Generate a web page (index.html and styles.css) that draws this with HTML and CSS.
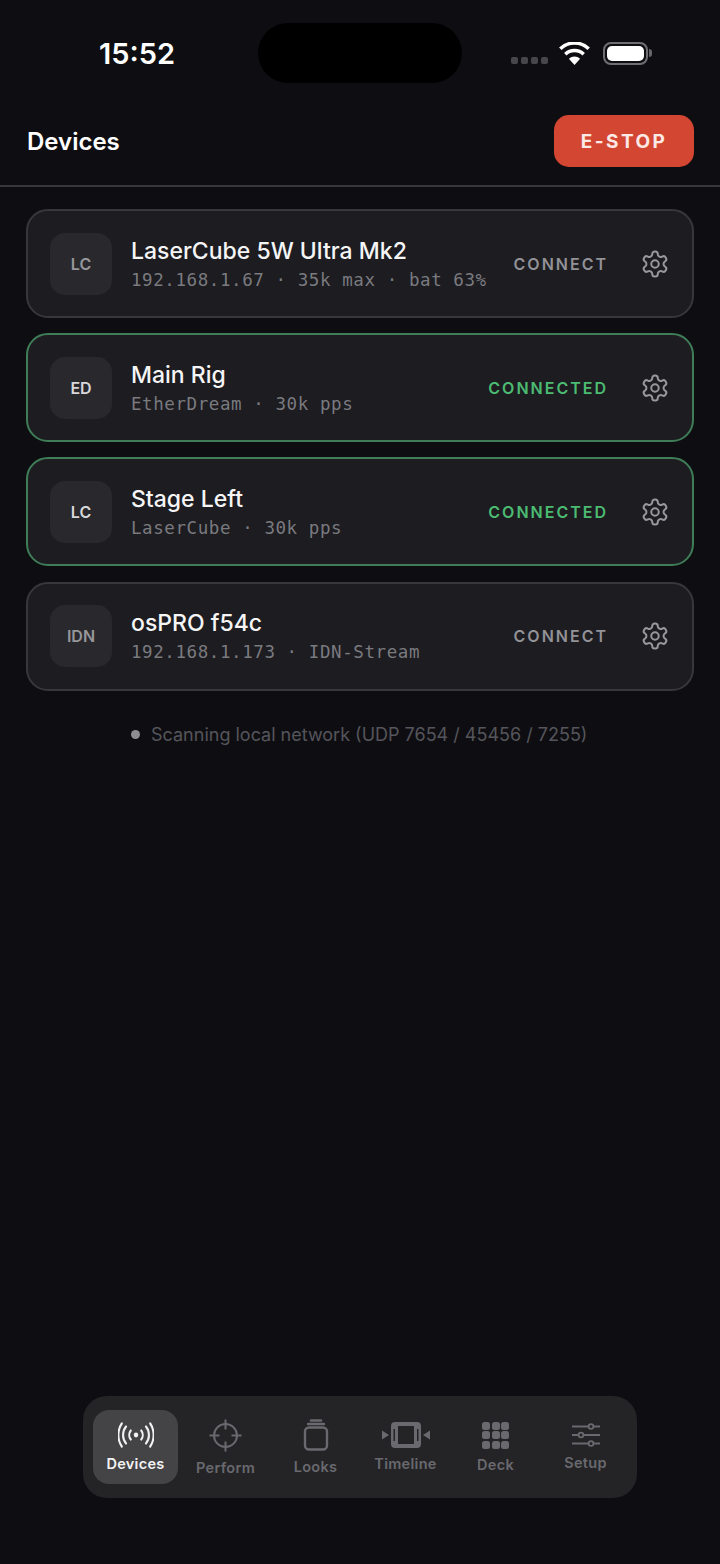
FILE: index.html
```html
<!DOCTYPE html>
<html lang="en">
<head>
    <meta charset="UTF-8">
    <meta name="viewport" content="width=device-width, initial-scale=1.0">
    <title>Devices</title>
    <link rel="stylesheet" href="styles.css">
</head>
<body>

<svg class="sprite" width="0" height="0">
    <symbol id="gear" viewBox="0 0 24 24">
        <path d="M12.22 2h-.44a2 2 0 0 0-2 2v.18a2 2 0 0 1-1 1.73l-.43.25a2 2 0 0 1-2 0l-.15-.08a2 2 0 0 0-2.73.73l-.22.38a2 2 0 0 0 .73 2.73l.15.1a2 2 0 0 1 1 1.72v.51a2 2 0 0 1-1 1.74l-.15.09a2 2 0 0 0-.73 2.73l.22.38a2 2 0 0 0 2.73.73l.15-.08a2 2 0 0 1 2 0l.43.25a2 2 0 0 1 1 1.73V20a2 2 0 0 0 2 2h.44a2 2 0 0 0 2-2v-.18a2 2 0 0 1 1-1.73l.43-.25a2 2 0 0 1 2 0l.15.08a2 2 0 0 0 2.73-.73l.22-.39a2 2 0 0 0-.73-2.73l-.15-.08a2 2 0 0 1-1-1.74v-.5a2 2 0 0 1 1-1.74l.15-.09a2 2 0 0 0 .73-2.73l-.22-.38a2 2 0 0 0-2.73-.73l-.15.08a2 2 0 0 1-2 0l-.43-.25a2 2 0 0 1-1-1.73V4a2 2 0 0 0-2-2z" fill="none" stroke="currentColor" stroke-width="1.6"/>
        <circle cx="12" cy="12" r="3" fill="none" stroke="currentColor" stroke-width="1.6"/>
    </symbol>
</svg>

<div class="screen">
    <div class="status-bar">
        <span class="time">15:52</span>
        <div class="island"></div>
        <div class="status-icons">
            <div class="signal"><i></i><i></i><i></i><i></i></div>
            <svg class="wifi" width="31" height="23" viewBox="0 0 31 23">
                <path d="M15.500 23l-5.600-6.300a8 8 0 0 1 11.200 0z" fill="#fff"/>
                <path d="M6.300 12.200a13.400 13.400 0 0 1 18.400 0" fill="none" stroke="#fff" stroke-width="3.500"/>
                <path d="M1.300 6.700a20.600 20.600 0 0 1 28.400 0" fill="none" stroke="#fff" stroke-width="3.500"/>
            </svg>
            <div class="battery"><div class="battery-fill"></div></div>
            <div class="battery-cap"></div>
        </div>
    </div>

    <header class="top-bar">
        <h1>Devices</h1>
        <button class="estop">E-STOP</button>
    </header>

    <main class="device-list">
        <div class="device">
            <div class="badge">LC</div>
            <div class="info">
                <div class="name">LaserCube 5W Ultra Mk2</div>
                <div class="meta">192.168.1.67 · 35k max · bat 63%</div>
            </div>
            <span class="action">CONNECT</span>
            <svg class="gear"><use href="#gear"/></svg>
        </div>
        <div class="device on">
            <div class="badge">ED</div>
            <div class="info">
                <div class="name">Main Rig</div>
                <div class="meta">EtherDream · 30k pps</div>
            </div>
            <span class="action">CONNECTED</span>
            <svg class="gear"><use href="#gear"/></svg>
        </div>
        <div class="device on">
            <div class="badge">LC</div>
            <div class="info">
                <div class="name">Stage Left</div>
                <div class="meta">LaserCube · 30k pps</div>
            </div>
            <span class="action">CONNECTED</span>
            <svg class="gear"><use href="#gear"/></svg>
        </div>
        <div class="device">
            <div class="badge">IDN</div>
            <div class="info">
                <div class="name">osPRO f54c</div>
                <div class="meta">192.168.1.173 · IDN-Stream</div>
            </div>
            <span class="action">CONNECT</span>
            <svg class="gear"><use href="#gear"/></svg>
        </div>

        <div class="scan">
            <span class="scan-dot"></span>
            Scanning local network (UDP 7654 / 45456 / 7255)
        </div>
    </main>

    <nav class="tabs">
        <div class="tab active">
            <svg width="36" height="26" viewBox="0 0 38 26" fill="none" stroke="currentColor" stroke-width="2.200" stroke-linecap="round" preserveAspectRatio="none">
                <circle cx="19" cy="13" r="2.400" fill="currentColor" stroke="none"/>
                <path d="M13.500 8.500a7 7 0 0 0 0 9"/>
                <path d="M24.500 8.500a7 7 0 0 1 0 9"/>
                <path d="M8.500 4.500a13 13 0 0 0 0 17"/>
                <path d="M29.500 4.500a13 13 0 0 1 0 17"/>
                <path d="M4 1.500a20 20 0 0 0 0 23"/>
                <path d="M34 1.500a20 20 0 0 1 0 23"/>
            </svg>
            <span>Devices</span>
        </div>
        <div class="tab">
            <svg width="33" height="33" viewBox="0 0 33 33" fill="none" stroke="currentColor" stroke-width="2">
                <circle cx="16.500" cy="16.500" r="11.500"/>
                <path d="M16.500 0.500v10M16.500 22.500v10M0.500 16.500h10M22.500 16.500h10"/>
            </svg>
            <span>Perform</span>
        </div>
        <div class="tab">
            <svg width="26" height="32" viewBox="0 0 26 32" fill="none" stroke="currentColor" stroke-width="2.400">
                <rect x="2" y="8.500" width="22" height="22" rx="4"/>
                <path d="M5 5h16" stroke-linecap="round"/>
                <path d="M8 1.500h10" stroke-linecap="round"/>
            </svg>
            <span>Looks</span>
        </div>
        <div class="tab">
            <svg width="48" height="26" viewBox="0 0 48 26" fill="none">
                <path d="M0 8.500l7 4.500-7 4.500z" fill="currentColor"/>
                <path d="M48 8.500l-7 4.500 7 4.500z" fill="currentColor"/>
                <path fill-rule="evenodd" d="M13 0h22a4 4 0 0 1 4 4v18a4 4 0 0 1-4 4H13a4 4 0 0 1-4-4V4a4 4 0 0 1 4-4zM16 4v18h16V4zM11.500 7v12h1.500V7zM35 7v12h1.500V7z" fill="currentColor"/>
            </svg>
            <span>Timeline</span>
        </div>
        <div class="tab">
            <div class="deck-icon">
                <i></i><i></i><i></i><i></i><i></i><i></i><i></i><i></i><i></i>
            </div>
            <span>Deck</span>
        </div>
        <div class="tab">
            <svg width="28" height="24" viewBox="0 0 28 24" fill="none" stroke="currentColor" stroke-width="1.800">
                <path d="M0 3.500h16M22 3.500h6M0 12h6M12 12h16M0 20.500h16M22 20.500h6"/>
                <circle cx="19" cy="3.500" r="2.400"/>
                <circle cx="9" cy="12" r="2.400"/>
                <circle cx="19" cy="20.500" r="2.400"/>
            </svg>
            <span>Setup</span>
        </div>
    </nav>
</div>

</body>
</html>
```

FILE: styles.css
```css
html, body {
    margin: 0;
    padding: 0;
}

body {
    font-family: Inter, "Noto Sans", sans-serif;
    background-color: #0e0e12;
    color: #fff;
}

.sprite {
    display: block;
    height: 0;
}

.screen {
    width: 720px;
    height: 1564px;
    display: flex;
    flex-direction: column;
    overflow: hidden;
}

/* status bar */
.status-bar {
    height: 60px;
    padding: 23px 0 17px 99px;
    display: flex;
    align-items: center;
}

.time {
    width: 159px;
    font-size: 29px;
    font-weight: 600;
}

.island {
    width: 204px;
    height: 60px;
    background-color: #000;
    border-radius: 30px;
}

.status-icons {
    margin-left: 49px;
    display: flex;
    align-items: center;
}

.signal {
    display: flex;
    gap: 3px;
    margin: 14px 11px 0 0;
}

.signal i {
    width: 7px;
    height: 7px;
    border-radius: 2px;
    background-color: #47474b;
}

.wifi {
    margin-right: 13px;
}

.battery {
    width: 45px;
    height: 23px;
    box-sizing: border-box;
    border: 2px solid #6f6f73;
    border-radius: 8px;
    padding: 2px;
}

.battery-fill {
    height: 100%;
    background-color: #fff;
    border-radius: 5px;
}

.battery-cap {
    width: 3px;
    height: 8px;
    margin-left: 1px;
    background-color: #66666a;
    border-radius: 0 3px 3px 0;
}

/* header */
.top-bar {
    height: 87px;
    box-sizing: border-box;
    padding: 15px 26px 18px 27px;
    display: flex;
    align-items: center;
    justify-content: space-between;
    border-bottom: 2px solid #38383c;
}

.top-bar h1 {
    margin: 0;
    font-size: 24px;
    font-weight: 600;
}

.estop {
    width: 140px;
    height: 52px;
    border: none;
    border-radius: 15px;
    background-color: #d34632;
    color: #fbe9e5;
    font-family: Inter, sans-serif;
    font-size: 19px;
    font-weight: 700;
    letter-spacing: 2.400px;
}

/* device cards */
.device-list {
    flex: 1;
    padding: 22px 26px 0;
    display: flex;
    flex-direction: column;
    gap: 15.200px;
}

.device {
    height: 109px;
    box-sizing: border-box;
    padding: 0 22px;
    display: flex;
    align-items: center;
    background-color: #1c1c21;
    border: 2px solid #38383c;
    border-radius: 22px;
}

.device.on {
    border-color: #3f7d58;
}

.badge {
    width: 62px;
    height: 62px;
    flex: none;
    display: flex;
    align-items: center;
    justify-content: center;
    background-color: #29292d;
    border-radius: 15px;
    color: #97979b;
    font-size: 16px;
    font-weight: 600;
}

.device.on .badge {
    color: #d8d8da;
}

.info {
    flex: 1;
    margin-left: 19px;
    padding-top: 2px;
}

.name {
    font-size: 23px;
    font-weight: 500;
    line-height: 28px;
    color: #f5f5f6;
}

.meta {
    margin-top: 2px;
    font-family: "DejaVu Sans Mono", monospace;
    font-size: 17.500px;
    letter-spacing: 0.580px;
    line-height: 26px;
    color: #7a7a7f;
}

.action {
    font-size: 16px;
    font-weight: 600;
    letter-spacing: 2px;
    margin-right: 32px;
    color: #929297;
}

.device.on .action {
    color: #4cbb72;
}

.gear {
    width: 30px;
    height: 30px;
    flex: none;
    color: #98989c;
}

/* scanning line */
.scan {
    margin-top: 18px;
    padding-left: 105px;
    display: flex;
    align-items: center;
    gap: 11px;
    font-size: 18px;
    color: #55555b;
}

.scan-dot {
    width: 9px;
    height: 9px;
    border-radius: 50%;
    background-color: #8e8e92;
}

/* bottom tabs */
.tabs {
    width: 554px;
    height: 102px;
    box-sizing: border-box;
    margin: 0 0 66px 83px;
    padding: 14px 9px 14px 10px;
    display: flex;
    gap: 5px;
    background-color: #242426;
    border-radius: 24px;
}

.tab {
    width: 85px;
    height: 74px;
    box-sizing: border-box;
    padding-top: 1px;
    display: flex;
    flex-direction: column;
    align-items: center;
    justify-content: center;
    gap: 7px;
    border-radius: 16px;
    color: #69696f;
    font-size: 14.500px;
    font-weight: 600;
    line-height: 18px;
    letter-spacing: 0.300px;
}

.tab.active {
    background-color: #444446;
    color: #f2f2f3;
}

.deck-icon {
    width: 27px;
    height: 27px;
    display: grid;
    grid-template-columns: repeat(3, 1fr);
    gap: 1.500px;
}

.deck-icon i {
    background-color: currentColor;
    border-radius: 2.500px;
}
```
